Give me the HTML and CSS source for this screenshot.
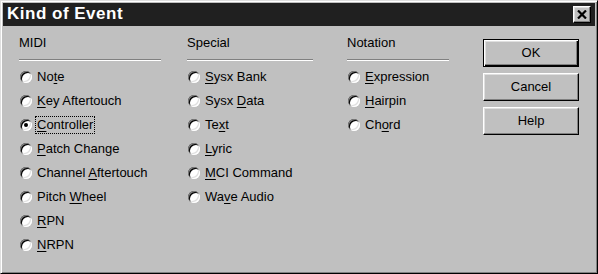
FILE: index.html
```html
<!DOCTYPE html>
<html lang="en">
<head>
  <meta charset="UTF-8" />
  <title>Kind of Event</title>
  <link rel="stylesheet" href="styles.css">
</head>
<body>

  <div class="window">
    <!-- Caption -->
    <div class="titlebar">
      <span class="title">Kind of Event</span>
      <button class="close-btn" aria-label="Close">
        <svg width="10" height="9" viewBox="0 0 10 9">
          <path d="M1 0.5 L9 8.5 M9 0.5 L1 8.5" stroke="#000" stroke-width="2.2" fill="none" />
        </svg>
      </button>
    </div>

    <div class="dialog">
      <!-- MIDI -->
      <div class="group group-midi">
        <div class="group-label">MIDI</div>
        <div class="etched"></div>
        <div class="option"><span class="radio"></span><span class="label">No<u>t</u>e</span></div>
        <div class="option"><span class="radio"></span><span class="label"><u>K</u>ey Aftertouch</span></div>
        <div class="option"><span class="radio checked"></span><span class="label focus"><u>C</u>ontroller</span></div>
        <div class="option"><span class="radio"></span><span class="label"><u>P</u>atch Change</span></div>
        <div class="option"><span class="radio"></span><span class="label">Channel <u>A</u>ftertouch</span></div>
        <div class="option"><span class="radio"></span><span class="label">Pitch <u>W</u>heel</span></div>
        <div class="option"><span class="radio"></span><span class="label"><u>R</u>PN</span></div>
        <div class="option"><span class="radio"></span><span class="label"><u>N</u>RPN</span></div>
      </div>

      <!-- Special -->
      <div class="group group-special">
        <div class="group-label">Special</div>
        <div class="etched"></div>
        <div class="option"><span class="radio"></span><span class="label"><u>S</u>ysx Bank</span></div>
        <div class="option"><span class="radio"></span><span class="label">Sysx <u>D</u>ata</span></div>
        <div class="option"><span class="radio"></span><span class="label">Te<u>x</u>t</span></div>
        <div class="option"><span class="radio"></span><span class="label"><u>L</u>yric</span></div>
        <div class="option"><span class="radio"></span><span class="label"><u>M</u>CI Command</span></div>
        <div class="option"><span class="radio"></span><span class="label">Wa<u>v</u>e Audio</span></div>
      </div>

      <!-- Notation -->
      <div class="group group-notation">
        <div class="group-label">Notation</div>
        <div class="etched"></div>
        <div class="option"><span class="radio"></span><span class="label"><u>E</u>xpression</span></div>
        <div class="option"><span class="radio"></span><span class="label"><u>H</u>airpin</span></div>
        <div class="option"><span class="radio"></span><span class="label">Ch<u>o</u>rd</span></div>
      </div>

      <!-- Buttons -->
      <div class="buttons">
        <button class="btn default">OK</button>
        <button class="btn">Cancel</button>
        <button class="btn">Help</button>
      </div>
    </div>
  </div>

</body>
</html>
```

FILE: styles.css
```css
* { margin: 0; padding: 0; box-sizing: border-box; }

body, html {
  width: 598px;
  height: 274px;
  overflow: hidden;
  background: #c0c0c0;
  font-family: "Liberation Sans", Arial, sans-serif;
  font-size: 13px;
  color: #000;
}

.window {
  width: 598px;
  height: 274px;
  padding: 2px;
  background: #c0c0c0;
  border: 1px solid;
  border-color: #dfdfdf #000 #000 #dfdfdf;
  box-shadow: inset 1px 1px #fff, inset -1px -1px #808080;
  display: flex;
  flex-direction: column;
}

/* caption */
.titlebar {
  height: 23px;
  background: #202020;
  display: flex;
  align-items: center;
  justify-content: space-between;
  padding: 0 4px 2px 4px;
}

.title {
  color: #fff;
  font-weight: bold;
  font-size: 17px;
  letter-spacing: 0.5px;
}

.close-btn {
  width: 18px;
  height: 17px;
  margin-top: 2px;
  background: #c0c0c0;
  border: 1px solid;
  border-color: #fff #000 #000 #fff;
  box-shadow: inset -1px -1px #808080, inset 1px 1px #dfdfdf;
  display: flex;
  align-items: center;
  justify-content: center;
}

/* body */
.dialog {
  flex: 1;
  display: flex;
  align-items: flex-start;
  padding-left: 16px;
}

.group {
  padding-top: 9px;
}

.group-midi { width: 142px; }
.group-special { width: 126px; margin-left: 26px; }
.group-notation { width: 102px; margin-left: 34px; }

.group-label {
  line-height: 16px;
  margin-bottom: 8px;
}

.etched {
  border-top: 1px solid #808080;
  border-bottom: 1px solid #fff;
  margin-bottom: 4px;
}

.option {
  height: 24px;
  display: flex;
  align-items: center;
  gap: 3px;
  padding-left: 1px;
}

.radio {
  width: 12px;
  height: 12px;
  flex: none;
  border-radius: 50%;
  background: #fff;
  box-shadow:
    inset 1px 1px #808080,
    inset -1px -1px #fff,
    inset 2px 2px #000,
    inset -2px -2px #dfdfdf;
  position: relative;
}

.radio.checked::after {
  content: '';
  position: absolute;
  left: 4px;
  top: 4px;
  width: 4px;
  height: 4px;
  border-radius: 50%;
  background: #000;
}

.label {
  line-height: 16px;
  padding: 0 1px;
  border: 1px dotted transparent;
  white-space: nowrap;
}

.label.focus {
  border-color: #000;
}

u {
  text-decoration-thickness: 1px;
  text-underline-offset: 2px;
}

/* buttons */
.buttons {
  margin-left: 34px;
  margin-top: 13px;
  width: 96px;
  display: flex;
  flex-direction: column;
  gap: 6px;
}

.btn {
  height: 28px;
  padding-bottom: 2px;
  font-family: inherit;
  font-size: 13px;
  color: #000;
  background: #c0c0c0;
  border: 1px solid;
  border-color: #fff #000 #000 #fff;
  box-shadow: inset -1px -1px #808080, inset 1px 1px #dfdfdf;
}

.btn.default {
  border-color: #000;
  box-shadow:
    inset 1px 1px #fff,
    inset -1px -1px #000,
    inset -2px -2px #808080,
    inset 2px 2px #dfdfdf;
}
```
